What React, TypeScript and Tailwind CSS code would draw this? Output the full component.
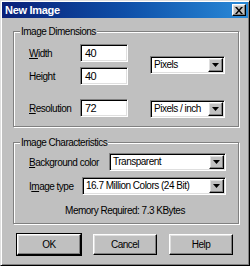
import React from "react";

const sunken =
  "bg-white border border-t-[#808080] border-l-[#808080] border-r-white border-b-white shadow-[inset_1px_1px_0_#000,inset_-1px_-1px_0_#dfdfdf]";
const raised =
  "bg-[#c0c0c0] border border-t-white border-l-white border-r-black border-b-black shadow-[inset_-1px_-1px_0_#808080,inset_1px_1px_0_#dfdfdf]";

function Arrow() {
  return (
    <div className={`${raised} w-[15px] h-[14px] flex items-center justify-center shrink-0`}>
      <svg width="7" height="4" viewBox="0 0 7 4">
        <path d="M0 0h7L3.5 4z" fill="#000" />
      </svg>
    </div>
  );
}

function Select({ text, w }: { text: string; w: string }) {
  return (
    <div className={`${sunken} ${w} h-[18px] flex items-center justify-between pl-[3px] pr-[1px]`}>
      <span className="leading-none whitespace-nowrap">{text}</span>
      <Arrow />
    </div>
  );
}

function Input({ value }: { value: string }) {
  return (
    <div className={`${sunken} w-[48px] h-[18px] flex items-center pl-[4px]`}>
      <span className="leading-none text-[11px]">{value}</span>
    </div>
  );
}

function Group({ title, children, h }: { title: string; children: React.ReactNode; h: string }) {
  return (
    <div className={`relative ${h} border border-[#808080] shadow-[inset_1px_1px_0_#fff,1px_1px_0_#fff]`}>
      <div className="absolute left-[6px] top-[-6px] bg-[#c0c0c0] px-[1px] leading-[11px]">{title}</div>
      {children}
    </div>
  );
}

function Button({ label, def }: { label: string; def?: boolean }) {
  return (
    <div
      className={`${raised} w-[64px] h-[21px] flex items-center justify-center ${
        def ? "outline outline-1 outline-black" : ""
      }`}
    >
      {label}
    </div>
  );
}

export default function App() {
  return (
    <div className="w-[250px] h-[266px] bg-[#c0c0c0] border border-t-[#dfdfdf] border-l-[#dfdfdf] border-r-black border-b-black shadow-[inset_1px_1px_0_#fff,inset_-1px_-1px_0_#808080] p-[1px] font-['Liberation_Sans',Arial,sans-serif] text-[10px] tracking-[-0.5px] text-black">
      <div className="h-[16px] bg-gradient-to-r from-[#0a1f78] via-[#0f4fa8] to-[#2a8ad8] flex items-center justify-between pl-[3px] pr-[2px]">
        <span className="text-white font-bold text-[11px] tracking-[-0.3px]">New Image</span>
        <div className={`${raised} w-[14px] h-[12px] flex items-center justify-center`}>
          <svg width="8" height="7" viewBox="0 0 8 7">
            <path d="M0 0h2l2 2.5L6 0h2L5 3.5 8 7H6L4 4.5 2 7H0l3-3.5z" fill="#000" />
          </svg>
        </div>
      </div>
      <div className="ml-[11px] mr-[9px] mt-[13px] flex flex-col">
        <Group title="Image Dimensions" h="h-[96px]">
          <div className="pt-[12px] pl-[15px] flex flex-col">
            <div className="flex items-center">
              <div className="flex flex-col gap-[5px]">
                <div className="flex items-center">
                  <span className="w-[51px]"><u>W</u>idth</span>
                  <Input value="40" />
                </div>
                <div className="flex items-center">
                  <span className="w-[51px]">Height</span>
                  <Input value="40" />
                </div>
              </div>
              <div className="ml-[22px] mt-[1px]">
                <Select text="Pixels" w="w-[75px]" />
              </div>
            </div>
            <div className="flex items-center mt-[13px]">
              <span className="w-[51px]"><u>R</u>esolution</span>
              <Input value="72" />
              <div className="ml-[22px] mt-[2px]">
                <Select text="Pixels / inch" w="w-[75px]" />
              </div>
            </div>
          </div>
        </Group>
        <div className="mt-[15px]">
          <Group title="Image Characteristics" h="h-[82px]">
            <div className="pt-[10px] pl-[15px] flex flex-col">
              <div className="flex items-center">
                <span className="w-[80px]"><u>B</u>ackground color</span>
                <Select text="Transparent" w="w-[117px]" />
              </div>
              <div className="flex items-center mt-[6px]">
                <span className="w-[53px]">I<u>m</u>age type</span>
                <Select text="16.7 Million Colors (24 Bit)" w="w-[144px]" />
              </div>
            </div>
            <div className="mt-[9px] h-[14px] leading-[14px] text-center pr-[2px]">Memory Required: 7.3 KBytes</div>
          </Group>
        </div>
        <div className="mt-[10px] ml-[4px] flex gap-[12px]">
          <Button label="OK" def />
          <Button label="Cancel" />
          <Button label="Help" />
        </div>
      </div>
    </div>
  );
}
